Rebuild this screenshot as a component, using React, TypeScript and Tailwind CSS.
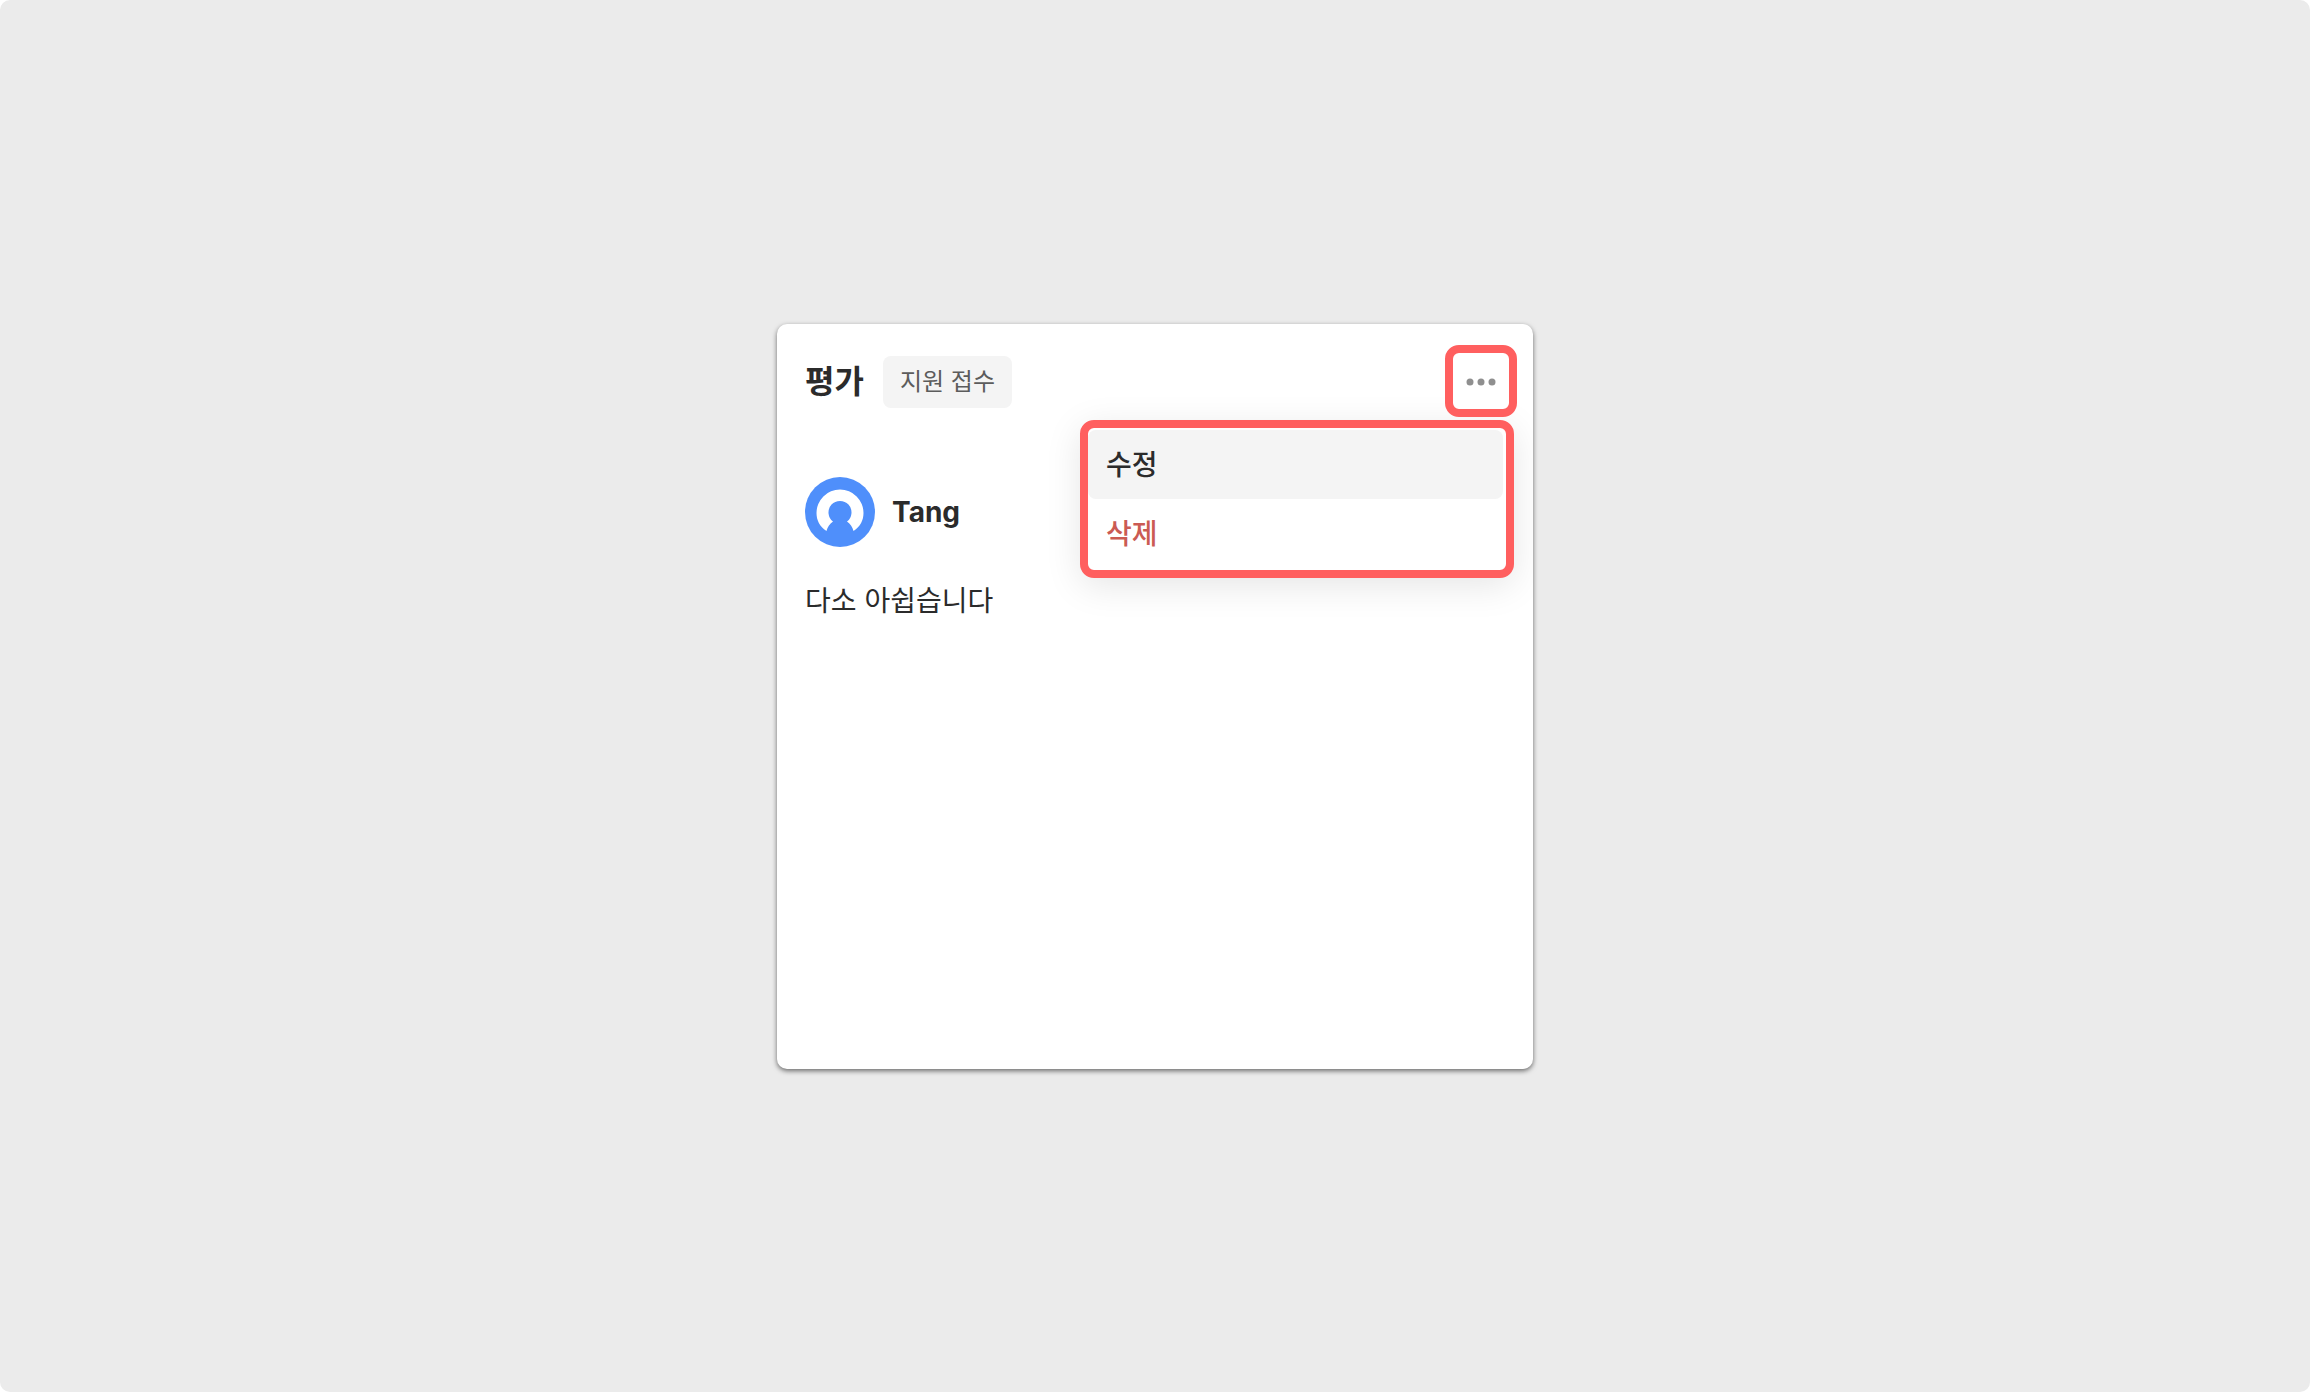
function Avatar() {
  return (
    <svg viewBox="0 0 70 70" className="size-[70px] shrink-0" aria-hidden="true">
      <circle cx="35" cy="35" r="35" fill="#4f8ffb" />
      <path
        d="M21.5 54C14.5 49.500 11.500 43 11.500 36a23.500 23.500 0 0 1 47 0c0 7-3 13.500-10 18-1-4-3-7-6.500-9.500a11.500 11.500 0 1 0-14 0c-3.500 2.500-5.500 5.500-6.500 9.500Z"
        fill="#fff"
      />
    </svg>
  );
}

function MoreIcon() {
  return (
    <svg viewBox="0 0 30 8" className="mt-0.5 h-2 w-[30px]" fill="#8f8f8f" aria-hidden="true">
      <circle cx="4" cy="4" r="3.500" />
      <circle cx="15" cy="4" r="3.500" />
      <circle cx="26" cy="4" r="3.500" />
    </svg>
  );
}

export default function App() {
  return (
    <div className="min-h-screen bg-white font-['Inter','Noto_Sans_CJK_KR',sans-serif] text-[#2b2b2b]">
      <main className="flex min-h-screen items-center justify-center rounded-[10px] bg-[#ebebeb]">
        <section className="relative min-h-[745px] w-full max-w-[756px] overflow-hidden rounded-[10px] bg-white px-7 pt-8 shadow-[0_2px_5px_rgba(0,0,0,0.55)]">
          <header className="flex h-[52px] items-center gap-[19px]">
            <h1 className="text-[32px] leading-[48px] font-bold">평가</h1>
            <span className="rounded-lg bg-[#f4f4f4] px-[17px] text-[24px] leading-[52px] text-[#5c5c5c]">지원 접수</span>
          </header>

          <button
            type="button"
            aria-label="더보기"
            aria-haspopup="menu"
            aria-expanded="true"
            className="absolute top-[21px] right-4 z-10 flex size-[72px] items-center justify-center rounded-[14px] border-8 border-[#ff5f5f] bg-white"
          >
            <MoreIcon />
          </button>

          <div
            role="menu"
            className="absolute top-24 right-[19px] w-[434px] rounded-[14px] border-8 border-[#ff5f5f] bg-white pt-0.5 pr-[3px] pb-0.5 shadow-[0_8px_36px_rgba(0,0,0,0.10)]"
          >
            <button type="button" role="menuitem" className="block w-full rounded-lg bg-[#f4f4f4] px-[18px] pt-0.5 text-left text-[28px] leading-[67px] font-medium">
              수정
            </button>
            <button type="button" role="menuitem" className="block w-full rounded-lg px-[18px] pt-0.5 text-left text-[28px] leading-[67px] font-medium text-[#cb5b53]">
              삭제
            </button>
          </div>

          <div className="mt-[69px] flex items-center gap-[17px]">
            <Avatar />
            <h2 className="text-[28px] leading-9 font-bold">Tang</h2>
          </div>
          <p className="mt-[34px] text-[28px] leading-10">다소 아쉽습니다</p>
        </section>
      </main>
    </div>
  );
}
